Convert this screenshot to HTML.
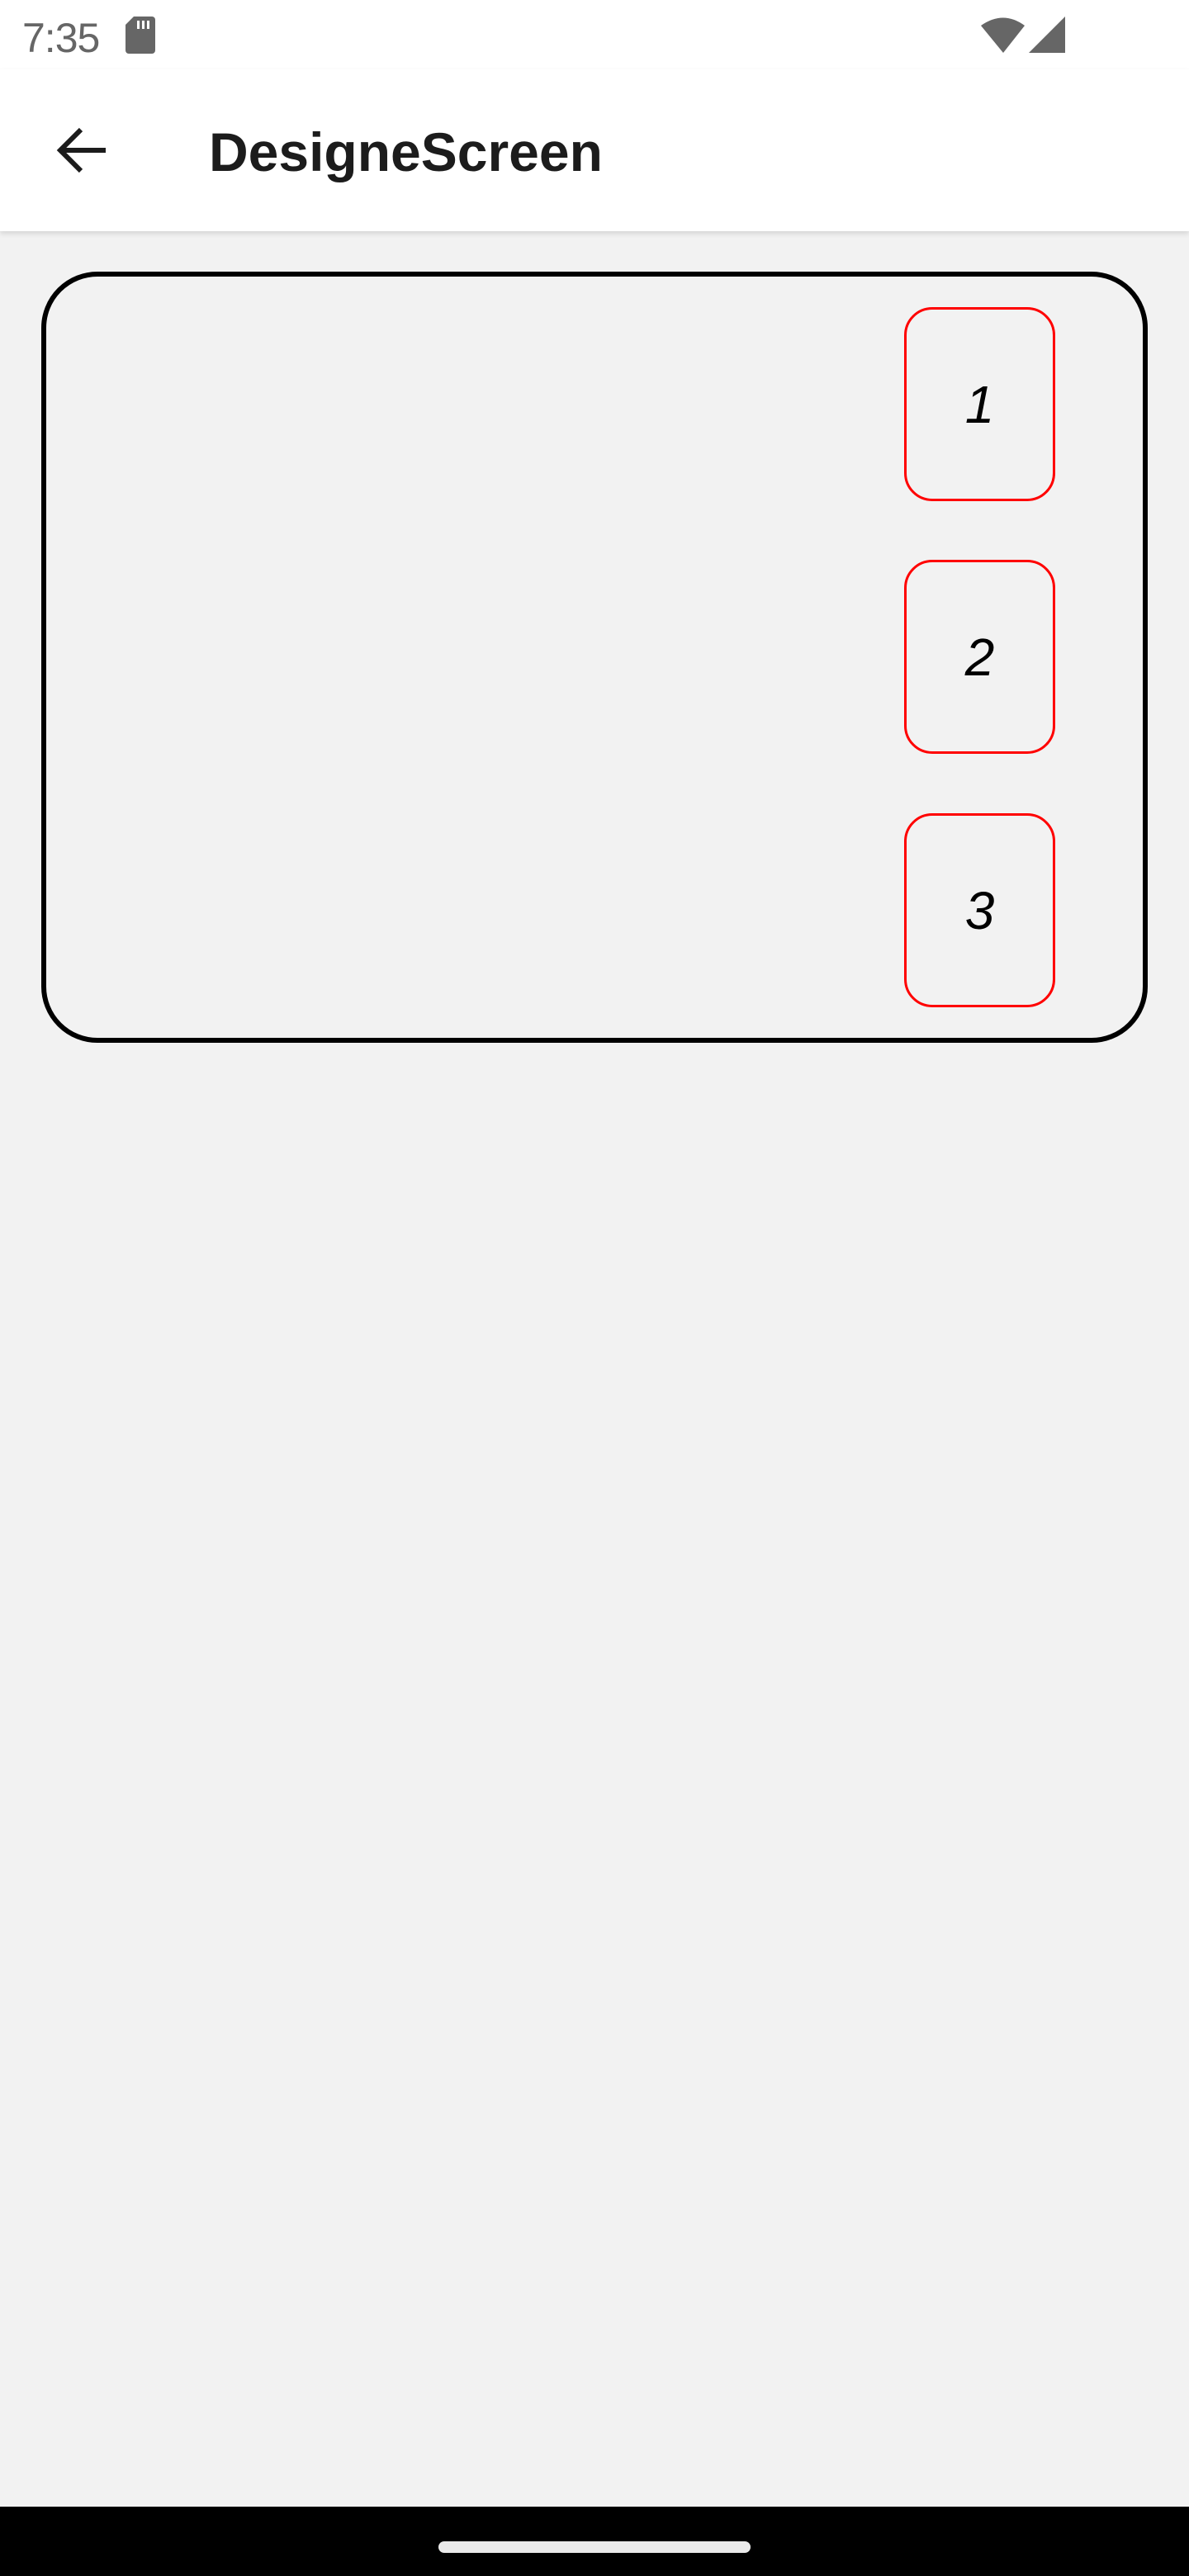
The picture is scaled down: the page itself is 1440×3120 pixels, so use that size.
<!DOCTYPE html>
<html><head><meta charset="utf-8"><style>
html,body{margin:0;padding:0}
body{width:1440px;height:3120px;background:#f2f2f2;position:relative;overflow:hidden;font-family:"Liberation Sans",sans-serif}
.status{position:absolute;left:0;top:0;width:1440px;height:84px;background:#fff}
.appbar{position:absolute;left:0;top:84px;width:1440px;height:196px;background:#fff;box-shadow:0 3px 6px rgba(0,0,0,.12)}
.time{position:absolute;left:27px;top:17px;font-size:50px;color:#666;letter-spacing:-1px}
.title{position:absolute;left:253px;top:146px;font-size:66px;color:#1c1c1c;font-weight:bold;white-space:nowrap}
.outer{position:absolute;left:50px;top:329px;width:1328px;height:922px;border:6px solid #000;border-radius:68px}
.card{position:absolute;left:1095px;width:177px;height:229px;border:3px solid #f00;border-radius:34px;display:flex;align-items:center;justify-content:center;font-size:64px;font-style:italic;color:#000}
.nav{position:absolute;left:0;top:3036px;width:1440px;height:84px;background:#000}
.pill{position:absolute;left:531px;top:3078px;width:378px;height:14px;border-radius:7px;background:#eaeaea}
</style></head><body>
<div class="status"></div>
<div class="time">7:35</div>
<svg style="position:absolute;left:152px;top:20px" width="36" height="45" viewBox="0 0 36 45"><path d="M10 0H32a4 4 0 0 1 4 4V41a4 4 0 0 1-4 4H4a4 4 0 0 1-4-4V10Z" fill="#666"/><rect x="14" y="5" width="3" height="10" fill="#fff"/><rect x="20" y="5" width="3" height="10" fill="#fff"/><rect x="26" y="5" width="3" height="10" fill="#fff"/></svg>
<svg style="position:absolute;left:1188px;top:18px" width="54" height="46" viewBox="0 0 54 46"><path d="M0 13Q27 -6 53 13L27 46Z" fill="#666"/></svg>
<svg style="position:absolute;left:1246px;top:20px" width="44" height="44" viewBox="0 0 44 44"><path d="M44 0V44H0Z" fill="#666"/></svg>
<div class="appbar"></div>
<svg style="position:absolute;left:68px;top:152px" width="62" height="60" viewBox="0 0 62 60"><path d="M60 30H6M30 5L5 30L30 55" fill="none" stroke="#1c1c1c" stroke-width="6"/></svg>
<div class="title">DesigneScreen</div>
<div class="outer"></div>
<div class="card" style="top:372px">1</div>
<div class="card" style="top:678px">2</div>
<div class="card" style="top:985px">3</div>
<div class="nav"></div>
<div class="pill"></div>
</body></html>
